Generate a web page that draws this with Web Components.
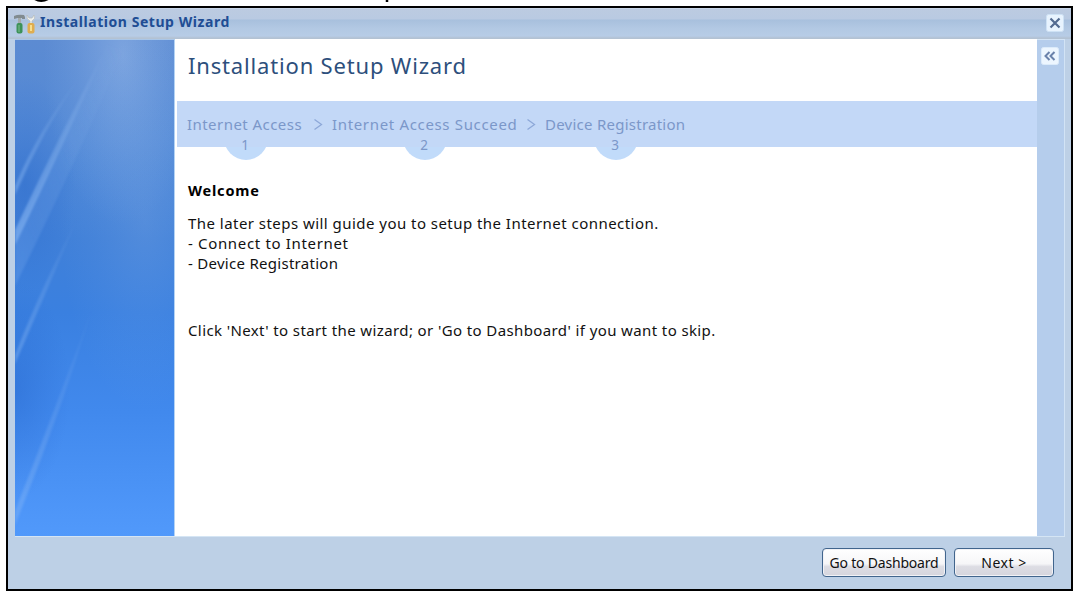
<!DOCTYPE html>
<html lang="en">
<head>
<meta charset="utf-8">
<title>Installation Setup Wizard</title>
<style>
  body {
    margin: 0;
    width: 1076px;
    height: 593px;
    overflow: hidden;
    background: #fff;
    font-family: "Noto Sans", "DejaVu Sans", sans-serif;
  }
</style>
</head>
<body>
<page-caption></page-caption>
<wizard-window heading="Installation Setup Wizard">
  <wizard-sidebar slot="side"></wizard-sidebar>
  <wizard-page heading="Installation Setup Wizard">
    <wizard-steps slot="steps">
      <wizard-step number="1" style="width: 116px; letter-spacing: 0.45px">Internet Access</wizard-step>
      <wizard-step number="2" style="width: 184px; letter-spacing: 0.66px">Internet Access Succeed</wizard-step>
      <wizard-step number="3" style="width: 140px; letter-spacing: 0.25px">Device Registration</wizard-step>
    </wizard-steps>
    <wizard-welcome></wizard-welcome>
  </wizard-page>
  <wizard-button slot="buttons" style="width: 124px; letter-spacing: -0.2px">Go to Dashboard</wizard-button>
  <wizard-button slot="buttons" style="width: 100px; letter-spacing: 0.5px">Next &gt;</wizard-button>
</wizard-window>

<script>
class BaseElement extends HTMLElement {
  constructor() {
    super();
    this.attachShadow({ mode: "open" });
  }

  connectedCallback() {
    const template = document.createElement("template");
    template.innerHTML = this.render();
    this.shadowRoot.replaceChildren(template.content.cloneNode(true));
  }
}

// bottom edge of the caption that is scrolled off the top
class PageCaption extends BaseElement {
  render() {
    return `
      <style>
        :host { display: block; height: 6px; }
        svg { display: block; }
      </style>
      <svg width="1076" height="6">
        <path d="M35 -1Q41 2.500 48 -1" fill="none" stroke="#000" stroke-width="2.500"/>
        <path d="M387 0v2" stroke="#000" stroke-width="2.500"/>
      </svg>
    `;
  }
}

class WizardWindow extends BaseElement {
  render() {
    return `
      <style>
        :host {
          display: flex;
          flex-direction: column;
          box-sizing: border-box;
          width: 1067px;
          height: 585px;
          margin-left: 6px;
          border: 2px solid #000;
          background: #bdd0e6;
        }
        header {
          display: flex;
          align-items: center;
          height: 31px;
          padding: 0 7px 0 6px;
          box-sizing: border-box;
          background: linear-gradient(#d3dfee 0, #bccbe1 1px, #b9cae2 11px, #a8c0dd 12px, #b2c8e3 20px, #b7cce6 28px, #b3c2d3 30px);
        }
        h1 {
          flex: 1;
          margin: -3px 0 0 4px;
          font-size: 14px;
          line-height: 20px;
          font-weight: bold;
          letter-spacing: 0.55px;
          color: #204d94;
          white-space: nowrap;
        }
        .close { margin-bottom: 1px; }
        .body {
          display: grid;
          grid-template-columns: 160px 1fr 28px;
          height: 498px;
          box-sizing: border-box;
          margin: 0 6px 0 7px;
          border-bottom: 1px solid #d5e5f4;
          background: #fff;
        }
        .rail {
          box-sizing: border-box;
          padding: 7px 0 0 4px;
          border: 1px solid #d2e3f5;
          border-width: 1px 1px 0 0;
          background: #b5cdec;
        }
        svg { display: block; }
        footer {
          display: flex;
          justify-content: flex-end;
          gap: 8px;
          padding: 11px 17px 0;
        }
      </style>
      <header>
        <svg width="22" height="22" viewBox="0 0 22 22">
          <path d="M0 3q4-2 10-1l1 2v2H8V5H4L0 6z" fill="#818b90"/>
          <path d="M4 5h3v7H4z" fill="#a4abad"/>
          <rect x="2.500" y="10" width="6" height="10.500" rx="2" fill="#3d9259"/>
          <path d="M5 12v7" stroke="#7fbd91"/>
          <path d="M13 2q-1 4 3 6v4h2V8q4-2 2-6l-2 3h-3z" fill="#eef0ed" stroke="#b5b9b8" stroke-width=".7"/>
          <rect x="13.500" y="10" width="7" height="10.500" rx="2" fill="#dfad50"/>
          <path d="M17 12v6" stroke="#f7df8f" stroke-width="2"/>
        </svg>
        <h1>${this.getAttribute("heading")}</h1>
        <svg class="close" width="18" height="18" viewBox="0 0 18 18">
          <rect x=".5" y=".5" width="17" height="17" rx="2" fill="#e8f3fe" stroke="#cee2f5"/>
          <path d="M4.500 4.500l9 9M13.500 4.500l-9 9" stroke="#536b91" stroke-width="2.200"/>
        </svg>
      </header>
      <div class="body">
        <slot name="side"></slot>
        <slot></slot>
        <div class="rail">
          <svg width="18" height="18" viewBox="0 0 18 18">
            <rect x=".5" y=".5" width="17" height="17" rx="2" fill="#edf6ff" stroke="#dcebfa"/>
            <path d="M8.500 5l-4 4 4 4M13.500 5l-4 4 4 4" fill="none" stroke="#6a82ab" stroke-width="2"/>
          </svg>
        </div>
      </div>
      <footer><slot name="buttons"></slot></footer>
    `;
  }
}

class WizardSidebar extends BaseElement {
  render() {
    return `
      <style>
        :host {
          display: block;
          box-sizing: border-box;
          border-top: 1px solid #a9c6e8;
          border-right: 1px solid #b4d3f4;
          overflow: hidden;
        }
        svg { display: block; }
      </style>
      <svg width="159" height="496" viewBox="0 0 159 496" preserveAspectRatio="none">
        <defs>
          <linearGradient id="sky" x2="0" y2="1">
            <stop offset="0" stop-color="#5c8bd2"/>
            <stop offset=".2" stop-color="#5289d6"/>
            <stop offset=".4" stop-color="#4080d8"/>
            <stop offset=".55" stop-color="#3a80e0"/>
            <stop offset=".75" stop-color="#4189ed"/>
            <stop offset="1" stop-color="#5199fb"/>
          </linearGradient>
          <radialGradient id="glow">
            <stop offset="0" stop-color="#a0bfec" stop-opacity=".48"/>
            <stop offset=".6" stop-color="#95b9ec" stop-opacity=".17"/>
            <stop offset="1" stop-color="#8bb4ec" stop-opacity="0"/>
          </radialGradient>
          <radialGradient id="shade">
            <stop offset="0" stop-color="#2463c8" stop-opacity=".4"/>
            <stop offset="1" stop-color="#2867cf" stop-opacity="0"/>
          </radialGradient>
          <linearGradient id="ray" x1="1" y1="0" x2="0" y2="1">
            <stop offset="0" stop-color="#a5c7f2" stop-opacity="0"/>
            <stop offset="1" stop-color="#8ebcf6" stop-opacity=".6"/>
          </linearGradient>
          <filter id="soft"><feGaussianBlur stdDeviation="1.300"/></filter>
        </defs>
        <rect width="159" height="496" fill="url(#sky)"/>
        <ellipse cx="108" cy="15" rx="80" ry="170" fill="url(#glow)"/>
        <ellipse cx="130" cy="180" rx="85" ry="190" fill="url(#glow)" opacity=".4"/>
        <ellipse cx="10" cy="145" rx="50" ry="110" fill="url(#shade)"/>
        <ellipse cx="0" cy="350" rx="55" ry="110" fill="url(#shade)"/>
        <g filter="url(#soft)">
          <path d="M92 5Q45 95 0 190v15Q52 98 92 5" fill="url(#ray)"/>
          <path d="M92 5Q48 98 0 201v45Q62 120 108 10z" fill="url(#ray)" opacity=".35"/>
          <path d="M66 35Q22 92 0 146v9Q28 90 66 35" fill="url(#ray)" opacity=".75"/>
          <path d="M64 175Q25 250 0 315v9Q32 250 64 175" fill="url(#ray)" opacity=".65"/>
          <path d="M80 260Q40 370 0 471v14Q47 370 80 260" fill="url(#ray)" opacity=".6"/>
        </g>
      </svg>
    `;
  }
}

class WizardPage extends BaseElement {
  render() {
    return `
      <style>
        :host {
          display: flex;
          flex-direction: column;
          min-width: 0;
          padding-left: 2px;
          background: #fff;
        }
        h2 {
          margin: 0;
          height: 62px;
          padding-left: 11px;
          box-sizing: border-box;
          font-size: 22px;
          line-height: 53px;
          font-weight: normal;
          letter-spacing: 0.83px;
          color: #2d4f7c;
          white-space: nowrap;
        }
      </style>
      <h2>${this.getAttribute("heading")}</h2>
      <slot name="steps"></slot>
      <slot></slot>
    `;
  }
}

class WizardSteps extends BaseElement {
  render() {
    return `
      <style>
        :host {
          display: flex;
          gap: 29px;
          height: 46px;
          padding-left: 10px;
          background: #c3d8f7;
          color: #7b97c9;
        }
      </style>
      <slot></slot>
    `;
  }
}

class WizardStep extends BaseElement {
  render() {
    return `
      <style>
        :host {
          display: block;
          position: relative;
          font-size: 15px;
          white-space: nowrap;
        }
        .label { line-height: 46px; height: 46px; }
        /* only the part of the circle below the bar shows */
        .bump {
          position: absolute;
          top: 34px;
          left: calc(50% - 21px);
          width: 44px;
          height: 25px;
          overflow: hidden;
        }
        .bump::before {
          content: "";
          position: absolute;
          inset: -19px 0 0;
          border-radius: 50%;
          background: #c1dbfa;
          clip-path: inset(31px 0 0);
        }
        .number {
          position: absolute;
          left: 0;
          right: 0;
          top: 34px;
          line-height: 20px;
          font-size: 13.5px;
          letter-spacing: 0;
          text-align: center;
        }
        .arrow {
          position: absolute;
          left: calc(100% + 10px);
          top: 17px;
        }
        :host(:last-child) .arrow { display: none; }
      </style>
      <div class="label"><slot></slot></div>
      <div class="bump"></div>
      <div class="number">${this.getAttribute("number")}</div>
      <svg class="arrow" width="11" height="14"><path d="M1.500 1.500L8.500 6.500l-7 5" fill="none" stroke="#8da8d8" stroke-width="1.300"/></svg>
    `;
  }
}

class WizardWelcome extends BaseElement {
  render() {
    return `
      <style>
        :host {
          display: block;
          padding: 33px 0 0 11px;
          font-size: 15px;
          line-height: 20px;
          color: #111;
          white-space: nowrap;
        }
        h3 {
          margin: 0 0 13px;
          font-size: 14.5px;
          line-height: 20px;
          letter-spacing: 0.8px;
          color: #000;
        }
        p { margin: 0; }
        .intro { letter-spacing: 0.46px; }
        .connect { letter-spacing: 0.66px; }
        .register { letter-spacing: 0.28px; }
        .hint { margin-top: 47px; letter-spacing: 0.39px; }
      </style>
      <h3>Welcome</h3>
      <p class="intro">The later steps will guide you to setup the Internet connection.</p>
      <p class="connect">- Connect to Internet</p>
      <p class="register">- Device Registration</p>
      <p class="hint">Click 'Next' to start the wizard; or 'Go to Dashboard' if you want to skip.</p>
    `;
  }
}

class WizardButton extends BaseElement {
  render() {
    return `
      <style>
        :host { display: block; }
        button {
          display: block;
          width: 100%;
          height: 29px;
          padding: 0 0 1px;
          border: 1px solid #41658d;
          border-radius: 4px;
          background: linear-gradient(#fff, #f6f6f8 55%, #dddde4 65%, #d5d5dd);
          box-shadow: inset 0 0 0 1px #f2f2f6;
          color: #111;
          font: 14px "Noto Sans", sans-serif;
          letter-spacing: inherit;
          white-space: nowrap;
        }
      </style>
      <button type="button"><slot></slot></button>
    `;
  }
}

customElements.define("page-caption", PageCaption);
customElements.define("wizard-window", WizardWindow);
customElements.define("wizard-sidebar", WizardSidebar);
customElements.define("wizard-page", WizardPage);
customElements.define("wizard-steps", WizardSteps);
customElements.define("wizard-step", WizardStep);
customElements.define("wizard-welcome", WizardWelcome);
customElements.define("wizard-button", WizardButton);
</script>
</body>
</html>
